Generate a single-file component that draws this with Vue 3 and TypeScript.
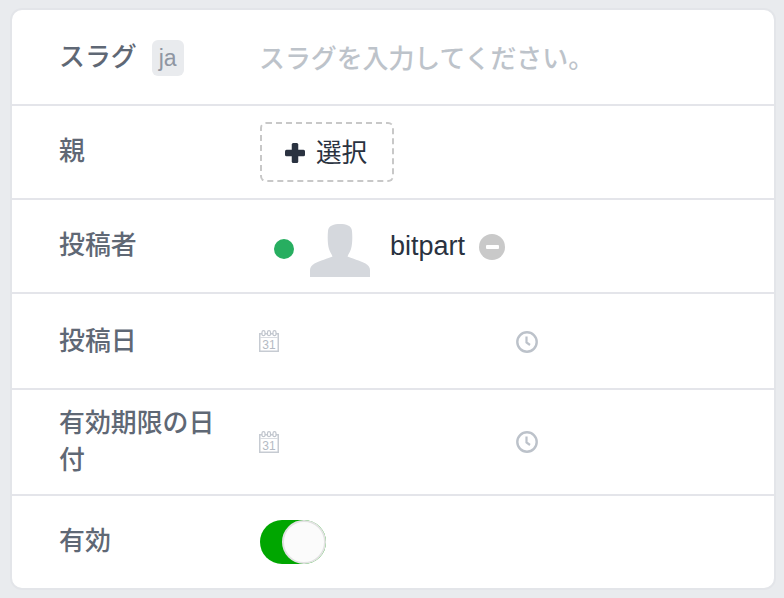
<script setup lang="ts">
const calendarRows = [0, 1];
</script>

<template>
  <div class="page">
    <div class="card">
      <div class="row row-slug">
        <div class="label">
          スラグ
          <span class="locale">ja</span>
        </div>
        <div class="value placeholder">スラグを入力してください。</div>
      </div>
      <div class="row row-parent">
        <div class="label">親</div>
        <div class="value">
          <button class="select-btn">
            <svg class="plus" viewBox="0 0 20 20" width="20" height="20">
              <rect x="6.750" y="0" width="6.500" height="20" rx="1.500" fill="#2a3240" />
              <rect x="0" y="6.750" width="20" height="6.500" rx="1.500" fill="#2a3240" />
            </svg>
            <span class="select-text">選択</span>
          </button>
        </div>
      </div>
      <div class="row row-author">
        <div class="label">投稿者</div>
        <div class="value author">
          <span class="status"></span>
          <svg class="avatar" viewBox="0 0 60 53" width="60" height="53">
            <path d="M30 0C36 0 41.500 1.500 42 7C42.500 13 42.500 20 41 25C40 28 38.500 30 37.500 32.500C42 34.500 50 36.500 55.500 39.500C58.500 41.200 60 43.500 60 46V53H0V46C0 43.500 1.500 41.200 4.500 39.500C10 36.500 18 34.500 22.500 32.500C21.500 30 20 28 19 25C17.500 20 17.500 13 18 7C18.500 1.500 24 0 30 0Z" fill="#d5d8dd" />
          </svg>
          <span class="author-name">bitpart</span>
          <span class="remove"><span class="minus"></span></span>
        </div>
      </div>
      <div class="row" :class="i === 0 ? 'row-date' : 'row-expire'" v-for="i in calendarRows" :key="i">
        <div class="label">{{ i === 0 ? "投稿日" : "有効期限の日付" }}</div>
        <div class="value dates">
          <div class="date-cell">
            <svg viewBox="0 0 20 22" width="20" height="22">
              <rect x="0.750" y="3.750" width="18.500" height="17.500" fill="none" stroke="#c6cbd2" stroke-width="1.500" />
              <rect x="1" y="7" width="18" height="1" fill="#d9dce1" />
              <g fill="#fff" stroke="#c0c5cd" stroke-width="1.200">
                <rect x="3" y="0.700" width="3" height="5" rx="1.500" />
                <rect x="8.500" y="0.700" width="3" height="5" rx="1.500" />
                <rect x="14" y="0.700" width="3" height="5" rx="1.500" />
              </g>
              <text x="10" y="18.500" text-anchor="middle" class="cal-num">31</text>
            </svg>
          </div>
          <div class="time-cell">
            <svg viewBox="0 0 22 22" width="22" height="22">
              <circle cx="11" cy="11" r="9.700" fill="none" stroke="#bcc2ca" stroke-width="2.400" />
              <path d="M10.500 5.500V11.500L14 14" fill="none" stroke="#bcc2ca" stroke-width="2.200" />
            </svg>
          </div>
        </div>
      </div>
      <div class="row row-active">
        <div class="label">有効</div>
        <div class="value">
          <div class="toggle"><span class="knob"></span></div>
        </div>
      </div>
    </div>
  </div>
</template>

<style>
html,
body {
  margin: 0;
  background: #e9ebee;
}
</style>

<style scoped>
.page {
  padding: 8px 8px 8px 10px;
  font-family: "Liberation Sans", "Noto Sans CJK JP", sans-serif;
  font-size: 25.6px;
}

.card {
  background: #fff;
  border: 2px solid #e3e5e9;
  border-radius: 12px;
  overflow: hidden;
  height: 578px;
  display: flex;
  flex-direction: column;
}

.row {
  display: flex;
  align-items: center;
  padding-left: 48px;
  box-sizing: border-box;
  border-bottom: 2px solid #e4e5ea;
}

.row-slug {
  height: 96px;
}
.row-parent {
  height: 94px;
}
.row-author {
  height: 94px;
}
.row-date {
  height: 96px;
}
.row-expire {
  height: 106px;
}
.row-active {
  flex: 1;
  border-bottom: none;
}

.label {
  width: 164px;
  margin-left: -1px;
  margin-right: 37px;
  flex: none;
  color: #5f6875;
  font-size: 25.9px;
  font-weight: 500;
  line-height: 37px;
  display: flex;
  flex-wrap: wrap;
  align-items: center;
}

.row-parent .label,
.row-active .label {
  margin-bottom: 2px;
}

.row-author .label {
  margin-bottom: 1px;
}

.locale {
  margin-left: 15px;
  margin-top: 2px;
  background: #e9ebee;
  color: #8f96a2;
  border-radius: 6px;
  width: 32px;
  height: 36px;
  line-height: 36px;
  font-size: 23px;
  font-weight: 400;
  text-align: center;
}

.placeholder {
  color: #bdc3ca;
  font-size: 25.9px;
  font-weight: 500;
  margin-left: -1px;
  margin-bottom: 2px;
}

.select-btn {
  display: flex;
  align-items: center;
  width: 134px;
  height: 60px;
  padding: 0 0 0 23px;
  box-sizing: border-box;
  background: #fff;
  border: 2px dashed #c8c8c8;
  border-radius: 6px;
  color: #2a3240;
  font: inherit;
  line-height: 36px;
}

.plus {
  margin-top: 2px;
}

.select-text {
  margin-left: 11px;
  margin-top: 2px;
}

.author {
  display: flex;
  align-items: center;
  color: #2a3240;
}

.status {
  width: 20px;
  height: 20px;
  border-radius: 50%;
  background: #27ae60;
  margin-left: 14px;
  margin-top: 6px;
}

.avatar {
  margin-left: 16px;
  margin-top: 9px;
}

.author-name {
  margin-left: 20px;
  font-size: 27px;
}

.remove {
  margin-left: 14px;
  margin-top: 2px;
  width: 26px;
  height: 26px;
  border-radius: 50%;
  background: #c9c9c9;
  display: flex;
  align-items: center;
  justify-content: center;
}

.minus {
  width: 13px;
  height: 4px;
  border-radius: 1px;
  background: #fff;
}

.dates {
  display: flex;
  align-items: center;
}

.date-cell {
  width: 256px;
  margin-left: -1px;
  margin-right: 1px;
  display: flex;
}

.time-cell {
  display: flex;
  margin-top: 2px;
}

.row-expire .time-cell {
  margin-top: 0;
}

.cal-num {
  font-size: 12px;
  font-weight: 400;
  fill: #b4bac3;
}

.toggle {
  width: 66px;
  height: 44px;
  border-radius: 22px;
  background: #00a600;
  display: flex;
  justify-content: flex-end;
}

.knob {
  width: 44px;
  height: 44px;
  box-sizing: border-box;
  border-radius: 50%;
  background: #fbfbfb;
  border: 2px solid #e2e2e2;
}
</style>
